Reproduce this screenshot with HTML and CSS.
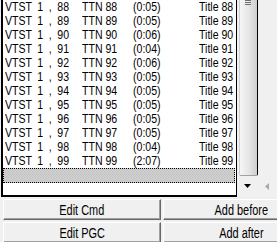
FILE: index.html
```html
<!DOCTYPE html>
<html lang="en">
<head>
    <meta charset="UTF-8">
    <title>Titles</title>
    <link rel="stylesheet" href="styles.css">
</head>
<body>
    <div class="top">
        <div class="list">
            <div class="row"><span>VTST 1 , 88</span><span>TTN 88</span><span>(0:05)</span><span>Title 88</span></div>
            <div class="row"><span>VTST 1 , 89</span><span>TTN 89</span><span>(0:05)</span><span>Title 89</span></div>
            <div class="row"><span>VTST 1 , 90</span><span>TTN 90</span><span>(0:06)</span><span>Title 90</span></div>
            <div class="row"><span>VTST 1 , 91</span><span>TTN 91</span><span>(0:04)</span><span>Title 91</span></div>
            <div class="row"><span>VTST 1 , 92</span><span>TTN 92</span><span>(0:06)</span><span>Title 92</span></div>
            <div class="row"><span>VTST 1 , 93</span><span>TTN 93</span><span>(0:05)</span><span>Title 93</span></div>
            <div class="row"><span>VTST 1 , 94</span><span>TTN 94</span><span>(0:05)</span><span>Title 94</span></div>
            <div class="row"><span>VTST 1 , 95</span><span>TTN 95</span><span>(0:05)</span><span>Title 95</span></div>
            <div class="row"><span>VTST 1 , 96</span><span>TTN 96</span><span>(0:05)</span><span>Title 96</span></div>
            <div class="row"><span>VTST 1 , 97</span><span>TTN 97</span><span>(0:05)</span><span>Title 97</span></div>
            <div class="row"><span>VTST 1 , 98</span><span>TTN 98</span><span>(0:04)</span><span>Title 98</span></div>
            <div class="row"><span>VTST 1 , 99</span><span>TTN 99</span><span>(2:07)</span><span>Title 99</span></div>
            <div class="row selected"></div>
        </div>
        <div class="side">
            <div class="vscroll">
                <div class="thumb">
                    <div class="grip"></div>
                </div>
            </div>
            <div class="arrows">
                <div class="cell">
                    <svg width="8" height="5" viewBox="0 0 8 5"><polygon points="0,0 7,0 3.5,4" fill="#000"/></svg>
                </div>
                <div class="cell">
                    <svg width="5" height="8" viewBox="0 0 5 8"><polygon points="4,0 4,7 0,3.5" fill="#a8a8a8"/></svg>
                </div>
            </div>
        </div>
    </div>

    <div class="buttons">
        <button class="btn"><span>Edit Cmd</span></button>
        <button class="btn"><span>Add before</span></button>
        <button class="btn"><span>Edit PGC</span></button>
        <button class="btn"><span>Add after</span></button>
    </div>
</body>
</html>
```

FILE: styles.css
```css
body {
    margin: 0;
    background-color: #f0f0f0;
    overflow: hidden;
}
.top {
    display: flex;
    height: 197px;
}
.list {
    width: 233px;
    margin-left: 1px;
    background-color: #fff;
    border-left: 2px solid #000;
    border-right: 1px solid #000;
    border-bottom: 2px solid #000;
    font-family: "Liberation Sans", Arial, sans-serif;
    font-size: 12px;
    color: #000;
}
.row {
    display: grid;
    grid-template-columns: 77px 51px 66px 1fr;
    height: 14px;
    line-height: 14px;
    padding-left: 2px;
    white-space: nowrap;
}
/* the listbox font is a narrow one; squeeze the glyphs */
.row span {
    display: inline-block;
    transform: scaleX(0.88);
    transform-origin: left center;
}
.row span:first-child {
    word-spacing: 3px;
}
.row.selected {
    margin-right: 1px;
    height: 13px;
    background-color: #cbcbcb;
    border: 1px dotted #000;
}
.side {
    flex: 1;
    display: flex;
    flex-direction: column;
}
.vscroll {
    width: 19px;
    height: 176px;
    padding-left: 2px;
    display: flex;
}
.thumb {
    flex: 1;
    background: linear-gradient(to right, #f6f6f6, #e4e4e4 55%, #cfcfcf);
    border-right: 1px solid #000;
    border-left: 1px solid #d0d0d0;
    border-bottom: 1px solid #a0a0a0;
    border-radius: 0 0 2px 2px;
    display: flex;
    justify-content: center;
}
.grip {
    width: 6px;
    height: 5px;
    margin-right: 2px;
    background: repeating-linear-gradient(to bottom, #707070 0, #707070 1px, transparent 1px, transparent 2px);
}
.arrows {
    flex: 1;
    display: flex;
}
.cell {
    display: flex;
    align-items: center;
    justify-content: center;
}
.cell:first-child {
    width: 21px;
}
.cell:last-child {
    width: 18px;
}
.buttons {
    display: grid;
    grid-template-columns: 158px 156px;
    gap: 2px;
    margin-top: 2px;
    padding-left: 3px;
}
.btn {
    height: 21px;
    padding: 0;
    margin: 0;
    background-color: #f0f0f0;
    border: 1px solid;
    border-color: #fff #696969 #696969 #fff;
    box-shadow: inset -1px -1px 0 #a0a0a0;
    font-family: "Liberation Sans", Arial, sans-serif;
    font-size: 14px;
    color: #000;
}
.btn span {
    display: inline-block;
    transform: scaleX(0.78);
}
```
